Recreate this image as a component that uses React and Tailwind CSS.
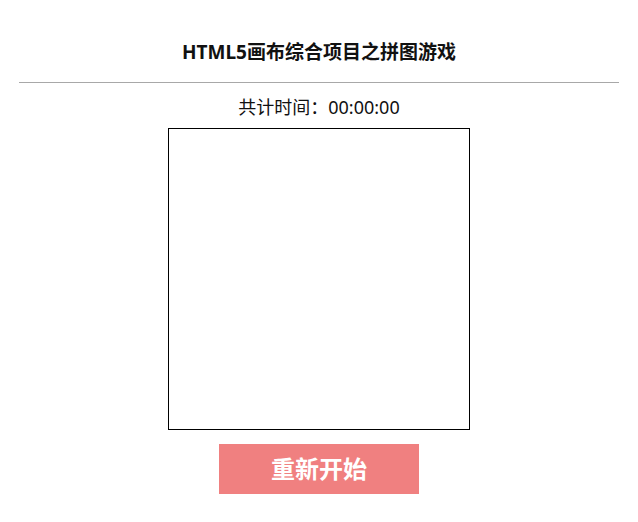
export default function App() {
  return (
    <div
      className="w-full bg-white text-black"
      style={{ fontFamily: '"Noto Sans", "Noto Sans CJK SC", sans-serif' }}
    >
      <div className="w-[600px] mx-auto flex flex-col items-center pt-[38px]">
        <h1 className="text-[19px] leading-[28px] font-bold text-[#111]">
          HTML5画布综合项目之拼图游戏
        </h1>
        <div className="w-full border-t border-[#a8a8a8] mt-[16px]"></div>
        <div className="mt-[12px] text-[18px] leading-[24px] text-[#111]">
          共计时间：00:00:00
        </div>
        <div className="mt-[9px] w-[302px] h-[302px] border border-black bg-white"></div>
        <button className="mt-[14px] w-[200px] h-[50px] bg-[#f08080] text-white text-[24px] font-bold leading-none flex items-center justify-center">
          重新开始
        </button>
      </div>
    </div>
  );
}
